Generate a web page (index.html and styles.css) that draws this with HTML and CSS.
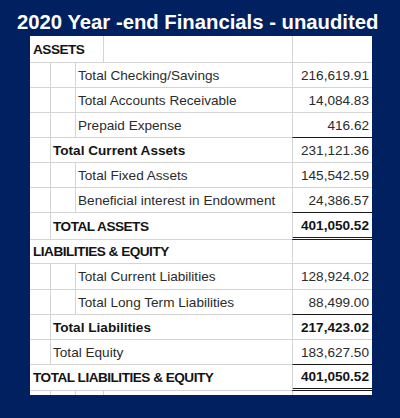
FILE: index.html
```html
<!DOCTYPE html>
<html lang="en">
<head>
<meta charset="utf-8">
<title>2020 Year-end Financials</title>
<link rel="stylesheet" href="styles.css">
</head>
<body>
<div class="page">
  <h1 class="title">2020 Year -end Financials - unaudited</h1>
  <div class="sheet">
    <div class="row r27">
      <div class="cell span-1-3 bold caps first">ASSETS</div>
      <div class="cell bl"></div>
      <div class="cell amt bl"></div>
    </div>
    <div class="row">
      <div class="cell first"></div><div class="cell bl"></div>
      <div class="cell span-3-4 bl">Total Checking/Savings</div>
      <div class="cell amt bl">216,619.91</div>
    </div>
    <div class="row">
      <div class="cell first"></div><div class="cell bl"></div>
      <div class="cell span-3-4 bl">Total Accounts Receivable</div>
      <div class="cell amt bl">14,084.83</div>
    </div>
    <div class="row">
      <div class="cell first"></div><div class="cell bl"></div>
      <div class="cell span-3-4 bl">Prepaid Expense</div>
      <div class="cell amt bl under">416.62</div>
    </div>
    <div class="row">
      <div class="cell first"></div>
      <div class="cell span-2-4 bl bold">Total Current Assets</div>
      <div class="cell amt bl">231,121.36</div>
    </div>
    <div class="row">
      <div class="cell first"></div><div class="cell bl"></div>
      <div class="cell span-3-4 bl">Total Fixed Assets</div>
      <div class="cell amt bl">145,542.59</div>
    </div>
    <div class="row">
      <div class="cell first"></div><div class="cell bl"></div>
      <div class="cell span-3-4 bl">Beneficial interest in Endowment</div>
      <div class="cell amt bl under">24,386.57</div>
    </div>
    <div class="row r27">
      <div class="cell first"></div>
      <div class="cell span-2-4 bl bold caps">TOTAL ASSETS</div>
      <div class="cell amt bl bold double">401,050.52</div>
    </div>
    <div class="row r24">
      <div class="cell span-1-4 bold caps first">LIABILITIES &amp; EQUITY</div>
      <div class="cell amt bl"></div>
    </div>
    <div class="row r26">
      <div class="cell first"></div><div class="cell bl"></div>
      <div class="cell span-3-4 bl">Total Current Liabilities</div>
      <div class="cell amt bl">128,924.02</div>
    </div>
    <div class="row">
      <div class="cell first"></div><div class="cell bl"></div>
      <div class="cell span-3-4 bl">Total Long Term Liabilities</div>
      <div class="cell amt bl under">88,499.00</div>
    </div>
    <div class="row">
      <div class="cell first"></div>
      <div class="cell span-2-4 bl bold">Total Liabilities</div>
      <div class="cell amt bl bold">217,423.02</div>
    </div>
    <div class="row">
      <div class="cell first"></div>
      <div class="cell span-2-4 bl">Total Equity</div>
      <div class="cell amt bl under">183,627.50</div>
    </div>
    <div class="row r26">
      <div class="cell span-1-4 bold caps first">TOTAL LIABILITIES &amp; EQUITY</div>
      <div class="cell amt bl bold double">401,050.52</div>
    </div>
    <div class="row tail">
      <div class="cell first"></div><div class="cell bl"></div>
      <div class="cell bl"></div><div class="cell bl"></div>
      <div class="cell amt bl"></div>
    </div>
  </div>
</div>
</body>
</html>
```

FILE: styles.css
```css
html, body {
  margin: 0;
  padding: 0;
}

body {
  background: #002060;
  width: 400px;
  height: 418px;
  overflow: hidden;
  font-family: "Liberation Sans", Arial, sans-serif;
}

.page {
  display: flex;
  flex-direction: column;
  align-items: flex-start;
}

.title {
  margin: 0 0 2px 0;
  padding: 10px 0 0 17px;
  font-size: 20.3px;
  line-height: 24px;
  font-weight: bold;
  color: #ffffff;
  white-space: nowrap;
}

.sheet {
  margin-left: 30px;
  width: 342px;
  background: #ffffff;
  display: flex;
  flex-direction: column;
  overflow: hidden;
}

.row {
  display: grid;
  grid-template-columns: 20px 25px 28px 189px 80px;
  height: 25px;
}

.row.r27 { height: 27px; }
.row.r26 { height: 26px; }
.row.r24 { height: 24px; }
.row.tail { height: 4px; }

.cell {
  box-sizing: border-box;
  border-bottom: 1px solid #d4d4d4;
  font-size: 13.6px;
  color: #2b2b2b;
  padding-left: 2px;
  display: flex;
  align-items: center;
  white-space: nowrap;
  overflow: hidden;
}

.tail .cell {
  border-bottom: none;
}

.cell.first {
  padding-left: 3px;
}

.cell.bl {
  border-left: 1px solid #d4d4d4;
}

.span-1-3 { grid-column: 1 / 4; }
.span-1-4 { grid-column: 1 / 5; }
.span-2-4 { grid-column: 2 / 5; }
.span-3-4 { grid-column: 3 / 5; }

.bold {
  font-weight: bold;
  color: #141414;
}

.caps {
  letter-spacing: -0.5px;
}

.amt {
  grid-column: 5;
  justify-content: flex-end;
  padding-left: 0;
  padding-right: 3px;
}

.amt.under {
  border-bottom: 1px solid #1a1a1a;
}

.amt.double {
  border-bottom: 3px double #1a1a1a;
}
```
